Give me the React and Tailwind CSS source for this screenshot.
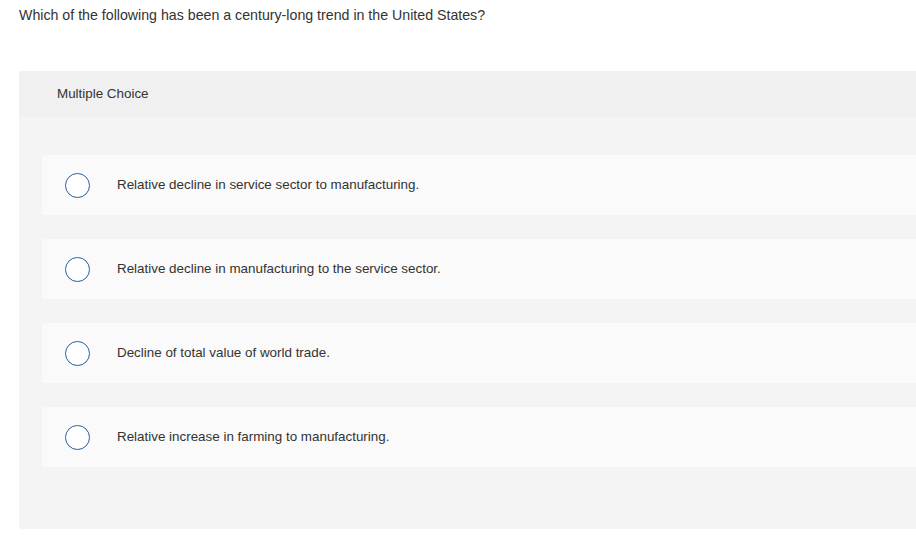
const OPTIONS = [
  'Relative decline in service sector to manufacturing.',
  'Relative decline in manufacturing to the service sector.',
  'Decline of total value of world trade.',
  'Relative increase in farming to manufacturing.',
]

function Choice({ label }) {
  return (
    <div className="flex items-center h-[60px] bg-[#fafafa] rounded-l-[3px] pl-[23px]">
      <span className="w-[25px] h-[25px] rounded-full border-[1.5px] border-[#2a6099] bg-white flex-shrink-0" />
      <span className="ml-[27px] text-[13.4px] text-[#333]">{label}</span>
    </div>
  )
}

export default function App() {
  return (
    <main className="w-[916px] h-[552px] overflow-hidden bg-white font-['Liberation_Sans',Arial,sans-serif]">
      <p className="pt-[6px] pl-[19px] text-[14.2px] leading-[19px] text-[#333]">
        Which of the following has been a century-long trend in the United States?
      </p>

      <section className="mt-[46px] ml-[19px] mr-[-20px] rounded-bl-[3px] overflow-hidden">
        <div className="h-[46px] bg-[#f0f0f0] flex items-center pl-[38px] text-[13.4px] text-[#333]">
          Multiple Choice
        </div>
        <div className="bg-[#f4f4f4] pt-[38px] pb-[62px] pl-[23px] flex flex-col gap-[24px]">
          {OPTIONS.map(o => <Choice key={o} label={o} />)}
        </div>
      </section>
    </main>
  )
}
